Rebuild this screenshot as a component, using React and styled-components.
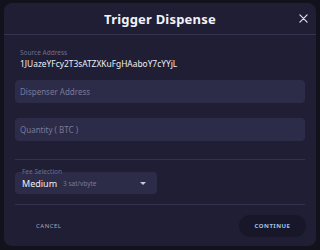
import React from "react";
import styled, { createGlobalStyle } from "styled-components";

const Global = createGlobalStyle`
  html, body {
    margin: 0;
    padding: 0;
    background: #12121d;
    font-family: "Noto Sans", "DejaVu Sans", sans-serif;
  }
  * { box-sizing: border-box; }
`;

function App() {
  return (
    <>
      <Global />
      <Backdrop>
        <Dialog>
          <Header>
            <Title>Trigger Dispense</Title>
            <Close aria-label="close">
              <svg width="9" height="9" viewBox="0 0 10 10">
                <path d="M1 1L9 9M9 1L1 9" stroke="#d8d8e6" strokeWidth="1.4" strokeLinecap="round" />
              </svg>
            </Close>
          </Header>
          <Body>
            <Source>
              <SmallLabel>Source Address</SmallLabel>
              <Address>1JUazeYFcy2T3sATZXKuFgHAaboY7cYYjL</Address>
            </Source>
            <Field placeholder="Dispenser Address" />
            <Field placeholder="Quantity ( BTC )" />
          </Body>
          <Divider />
          <FeeArea>
            <Select>
              <FeeLabel>Fee Selection</FeeLabel>
              <Speed>Medium</Speed>
              <Rate>3 sat/vbyte</Rate>
              <Caret />
            </Select>
          </FeeArea>
          <Divider />
          <Actions>
            <TextButton>CANCEL</TextButton>
            <PillButton>CONTINUE</PillButton>
          </Actions>
        </Dialog>
      </Backdrop>
    </>
  );
}

const Backdrop = styled.div`
  width: 320px;
  height: 250px;
  padding: 3px 4px 4px 4px;
`;

const Dialog = styled.div`
  height: 243px;
  background: #1f1e35;
  border-radius: 8px;
  display: flex;
  flex-direction: column;
  overflow: hidden;
`;

const Header = styled.div`
  position: relative;
  height: 32px;
  display: flex;
  align-items: center;
  justify-content: center;
  border-bottom: 1px solid #34334f;
`;

const Title = styled.h2`
  margin: 0;
  color: #f2f2f7;
  font-size: 13px;
  font-weight: 700;
  letter-spacing: 0.2px;
`;

const Close = styled.button`
  position: absolute;
  right: 8px;
  top: 11px;
  border: 0;
  background: none;
  padding: 0;
  display: flex;
`;

const Body = styled.div`
  padding: 13px 11px 18px 11px;
  display: flex;
  flex-direction: column;
  gap: 15px;
`;

const Source = styled.div`
  padding-left: 5px;
  display: flex;
  flex-direction: column;
  gap: 1px;
  margin-bottom: -4px;
`;

const SmallLabel = styled.span`
  color: #6f6e8c;
  font-size: 6.5px;
`;

const Address = styled.span`
  color: #eeeef5;
  font-size: 8.4px;
`;

const Field = styled.input`
  height: 23px;
  border: 0;
  border-radius: 4px;
  background: #2c2b48;
  color: #fff;
  padding: 0 5px;
  font-family: inherit;
  font-size: 8px;
  outline: none;
  &::placeholder { color: #7b7a98; }
`;

const Divider = styled.div`
  height: 1px;
  margin: 0 11px;
  background: #33324e;
`;

const FeeArea = styled.div`
  padding: 12px 11px 10px 11px;
`;

const Select = styled.div`
  position: relative;
  width: 142px;
  height: 22px;
  border-radius: 4px;
  background: #2c2b48;
  display: flex;
  align-items: center;
  padding: 0 7px;
`;

const FeeLabel = styled.span`
  position: absolute;
  left: 7px;
  top: -5px;
  color: #6f6e8c;
  font-size: 6.5px;
`;

const Speed = styled.span`
  color: #f0f0f6;
  font-size: 9px;
  margin-right: 6px;
`;

const Rate = styled.span`
  color: #7b7a98;
  font-size: 6.5px;
`;

const Caret = styled.span`
  margin-left: auto;
  width: 0;
  height: 0;
  border-left: 3px solid transparent;
  border-right: 3px solid transparent;
  border-top: 3px solid #c9c8dc;
  margin-right: 4px;
`;

const Actions = styled.div`
  flex: 1;
  display: flex;
  align-items: center;
  justify-content: space-between;
  padding: 0 10px 0 22px;
`;

const TextButton = styled.button`
  border: 0;
  background: none;
  color: #a6a5bd;
  font-family: inherit;
  font-size: 6px;
  letter-spacing: 0.5px;
  padding: 0 10px;
`;

const PillButton = styled.button`
  border: 0;
  width: 67px;
  height: 22px;
  border-radius: 11px;
  background: #181729;
  color: #9ec3e6;
  font-family: inherit;
  font-size: 6px;
  font-weight: 700;
  letter-spacing: 0.5px;
`;

export default App;
